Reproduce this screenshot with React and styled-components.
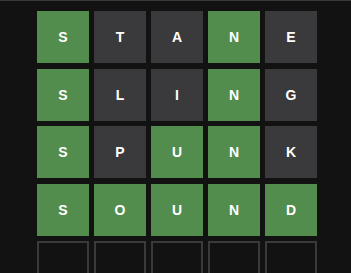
import React from "react";
import styled, { createGlobalStyle } from "styled-components";

const GlobalStyle = createGlobalStyle`
  html, body {
    margin: 0;
    padding: 0;
    background: #121213;
  }
  body {
    font-family: "Liberation Sans", Arial, sans-serif;
  }
`;

const Page = styled.div`
  width: 351px;
  height: 273px;
  overflow: hidden;
  background: #121213;
  border-top: 1px solid #3a3a3c;
  box-sizing: border-box;
  display: flex;
  justify-content: center;
  padding: 10px 0 0 3px;
`;

const Board = styled.div`
  display: grid;
  grid-template-columns: repeat(5, 52px);
  grid-auto-rows: 52px;
  column-gap: 5px;
  row-gap: 5.5px;
  width: 280px;
`;

const colors = {
  correct: "#538d4e",
  absent: "#3a3a3c",
};

const Tile = styled.div`
  box-sizing: border-box;
  display: flex;
  align-items: center;
  justify-content: center;
  background: ${(p) => (p.$state ? colors[p.$state] : "transparent")};
  border: ${(p) => (p.$state ? "none" : "2px solid #3a3a3c")};
  color: #ffffff;
  font-size: 14px;
  font-weight: bold;
  text-transform: uppercase;
`;

const guesses = [
  { word: "stane", states: ["correct", "absent", "absent", "correct", "absent"] },
  { word: "sling", states: ["correct", "absent", "absent", "correct", "absent"] },
  { word: "spunk", states: ["correct", "absent", "correct", "correct", "absent"] },
  { word: "sound", states: ["correct", "correct", "correct", "correct", "correct"] },
];

function App() {
  const rows = [...guesses, { word: "     ", states: [] }];
  return (
    <>
      <GlobalStyle />
      <Page>
        <Board>
          {rows.map((row, r) =>
            row.word.split("").map((ch, i) => (
              <Tile key={`${r}-${i}`} $state={row.states[i]}>
                {ch.trim()}
              </Tile>
            ))
          )}
        </Board>
      </Page>
    </>
  );
}

export default App;
